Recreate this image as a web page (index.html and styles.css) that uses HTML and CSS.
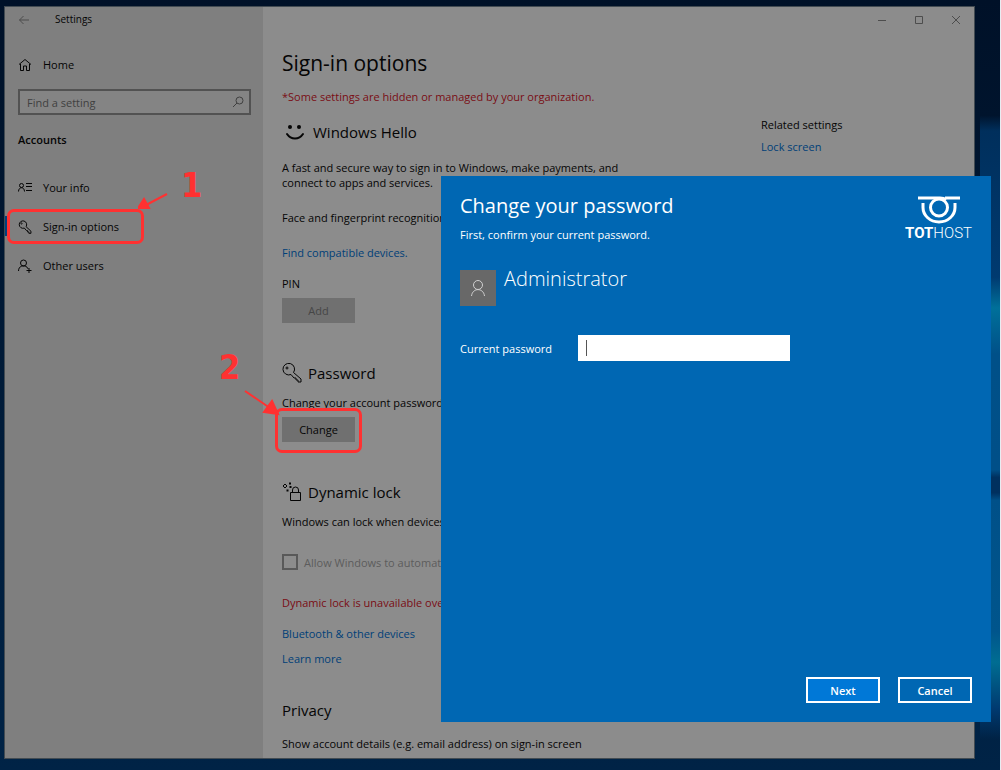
FILE: index.html
```html
<!DOCTYPE html>
<html lang="en">

<head>
    <meta charset="UTF-8">
    <meta name="viewport" content="width=device-width, initial-scale=1.0">
    <title>Settings</title>
    <link rel="stylesheet" href="styles.css">
</head>

<body>
    <div class="desktop">
        <div class="window">
            <aside class="sidebar">
                <header class="titlebar">
                    <button class="icon-btn" aria-label="Back">
                        <svg width="12" height="12" viewBox="0 0 12 12"><path d="M11 6H1.500M5.500 2L1.500 6l4 4" /></svg>
                    </button>
                    <span>Settings</span>
                </header>
                <a class="item home" href="#">
                    <svg width="14" height="14" viewBox="0 0 14 14"><path d="M1 6.500L7 1.500l6 5M2.500 6v6.500H5.500V8h3v4.500h3V6" /></svg>
                    Home
                </a>
                <div class="search">
                    <input type="text" placeholder="Find a setting" aria-label="Find a setting">
                    <svg width="12" height="12" viewBox="0 0 12 12"><circle cx="7.500" cy="4.500" r="3.500" /><path d="M5 7L1 11" /></svg>
                </div>
                <h2 class="group">Accounts</h2>
                <nav>
                    <a class="item" href="#">
                        <svg width="14" height="14" viewBox="0 0 14 14"><circle cx="3.500" cy="4.500" r="2" /><path d="M.5 10.500c0-5 6-5 6 0M8 2.500h6M8 5.500h6M8 9.500h6" /></svg>
                        Your info
                    </a>
                    <a class="item active" href="#">
                        <svg width="14" height="14" viewBox="0 0 20 20"><path class="thick" d="M11.500 9.500l7 6.500v3h-3v-2h-2v-2h-1.500l-3-3.500A5.300 5.300 0 1 1 11.500 9.500z" /><circle cx="5" cy="5" r="1" /></svg>
                        Sign-in options
                        <span class="mark mark-nav"></span>
                        <svg class="arrow arrow-nav" width="30" height="18" viewBox="0 0 30 18"><path d="M29 1L8 12" /><polygon points="0,15 6,6 11,15" /></svg>
                        <b class="step step-nav">1</b>
                    </a>
                    <a class="item" href="#">
                        <svg width="14" height="14" viewBox="0 0 14 14"><circle cx="5.500" cy="4" r="3" /><path d="M.5 12c0-7 9-6 9.500-2M11 9v5M8.500 11.500h5" /></svg>
                        Other users
                    </a>
                </nav>
            </aside>

            <main class="main">
                <div class="controls">
                    <button class="icon-btn" aria-label="Minimize"><svg width="10" height="10" viewBox="0 0 10 10"><path d="M1 5.500h8" /></svg></button>
                    <button class="icon-btn" aria-label="Maximize"><svg width="10" height="10" viewBox="0 0 10 10"><path d="M1.500 1.500h7v7h-7z" /></svg></button>
                    <button class="icon-btn" aria-label="Close"><svg width="10" height="10" viewBox="0 0 10 10"><path d="M1 1l8 8M9 1L1 9" /></svg></button>
                </div>
                <div class="columns">
                    <div class="content">
                        <h1>Sign-in options</h1>
                        <p class="warn">*Some settings are hidden or managed by your organization.</p>

                        <section class="hello">
                            <h2>
                                <svg class="smile" width="20" height="18" viewBox="0 0 20 18"><circle cx="5" cy="4" r="2" /><circle cx="14" cy="4" r="2" /><path d="M2 11c4 6 12 6 16 0" /></svg>
                                Windows Hello
                            </h2>
                            <p>A fast and secure way to sign in to Windows, make payments, and<br>connect to apps and services.</p>
                            <p class="gap">Face and fingerprint recognition</p>
                            <a class="link" href="#">Find compatible devices.</a>
                            <p class="pin">PIN</p>
                            <button class="btn" disabled>Add</button>
                        </section>

                        <section class="password">
                            <h2>
                                <svg width="20" height="20" viewBox="0 0 20 20"><path d="M11.500 9.500l7.500 6.500v3h-3v-2h-2v-2h-2l-3-3.500A5.800 5.800 0 1 1 11.500 9.500z" /><circle cx="5" cy="5" r="1" /></svg>
                                Password
                            </h2>
                            <p>Change your account password</p>
                            <div class="target">
                                <button class="btn">Change</button>
                                <span class="mark mark-btn"></span>
                                <svg class="arrow arrow-btn" width="36" height="26" viewBox="0 0 36 26"><path d="M1 1l25 17" /><polygon points="34,24 20,22 28,11" /></svg>
                                <b class="step step-btn">2</b>
                            </div>
                        </section>

                        <section class="dynamic">
                            <h2>
                                <svg width="20" height="20" viewBox="0 0 20 20"><path d="M8.500 10.500h10v8h-10zM10.500 10.500V8a3 3 0 0 1 6 0v2.500M3 2L5 4 3 6 1 4z" /><path class="dots" d="M7 1.500h2M7.500 5h2M4.500 8.500h2" /></svg>
                                Dynamic lock
                            </h2>
                            <p>Windows can lock when devices</p>
                            <label class="check"><input type="checkbox" disabled>Allow Windows to automat</label>
                            <p class="warn">Dynamic lock is unavailable ove</p>
                            <a class="link" href="#">Bluetooth &amp; other devices</a>
                            <a class="link more" href="#">Learn more</a>
                        </section>

                        <section class="privacy">
                            <h2>Privacy</h2>
                            <p>Show account details (e.g. email address) on sign-in screen</p>
                        </section>
                    </div>
                    <div class="related">
                        <p>Related settings</p>
                        <a class="link" href="#">Lock screen</a>
                    </div>
                </div>
            </main>
        </div>

        <form class="dialog" role="dialog" aria-labelledby="dialog-title">
            <div class="dialog-head">
                <div>
                    <h2 id="dialog-title">Change your password</h2>
                    <p>First, confirm your current password.</p>
                </div>
                <div class="logo">
                    <svg width="44" height="30" viewBox="0 0 44 30">
                        <path d="M1 3h22q4 0 6 2M28 3h15" />
                        <circle cx="22" cy="12.500" r="8.500" />
                        <path d="M6 8v4.500a16 14.500 0 0 0 32 0V8" />
                    </svg>
                    <span><b>TOT</b>HOST</span>
                </div>
            </div>
            <div class="user">
                <div class="avatar">
                    <svg width="16" height="18" viewBox="0 0 16 18"><circle cx="8" cy="6" r="4.500" /><path d="M1.500 17c1-8.500 12-8.500 13 0" /></svg>
                </div>
                <span>Administrator</span>
            </div>
            <div class="field">
                <label for="current">Current password</label>
                <div class="box">
                    <input id="current" type="password">
                    <i class="caret"></i>
                </div>
            </div>
            <div class="actions">
                <button class="next" type="button">Next</button>
                <button type="button">Cancel</button>
            </div>
        </form>
    </div>
</body>

</html>
```

FILE: styles.css
```css
* {
    margin: 0;
    padding: 0;
    box-sizing: border-box;
}

body {
    font: 11px/15px "Open Sans", "Noto Sans", sans-serif;
    color: #050505;
    background-color: #fff;
}

button,
input {
    font: inherit;
    color: inherit;
}

a {
    color: inherit;
    text-decoration: none;
}

svg {
    flex: none;
    fill: none;
    stroke: currentColor;
}

.desktop {
    position: relative;
    display: flex;
    min-height: 100vh;
    padding: 6px 25px 11px 4px;
    border: solid #e8edf2;
    border-width: 0 1px 1px 0;
    background:
        linear-gradient(to bottom, transparent 15%, #002f5c 17%, #003a70 36%, #00709a 40%, #005088 46%, #004f88 61%, #00305f 62%, #00305f 64%, #005088 65%, #00558c 82%, #006d92 86%, #003a70 92%, transparent 96%) right / 20px 100% no-repeat,
        linear-gradient(to bottom, #001128, #001c3a 55%, #002346);
}

.window {
    display: flex;
    flex: 1;
    border: 1px solid #424b52;
    background-color: #8c8c8c;
}

/* left menu */
.sidebar {
    width: 258px;
    flex: none;
    background-color: #7f7f7f;
}

.titlebar {
    display: flex;
    align-items: center;
    height: 25px;
    padding-left: 13px;
    font-size: 10px;
}

.icon-btn {
    display: flex;
    align-items: center;
    justify-content: center;
    border: 0;
    background: none;
    color: #4d4d4d;
}

.titlebar span {
    margin-left: 25px;
}

.item {
    position: relative;
    display: flex;
    align-items: center;
    gap: 11px;
    height: 39px;
    padding-left: 13px;
}

.home {
    margin-top: 13px;
}

.search {
    display: flex;
    align-items: center;
    height: 26px;
    margin: 5px 12px 0 13px;
    padding-right: 5px;
    border: 2px solid #525252;
    background-color: #848484;
    color: #404040;
}

.search input {
    flex: 1;
    min-width: 0;
    padding-left: 7px;
    border: 0;
    outline: 0;
    background: none;
}

.search input::placeholder {
    color: #404040;
}

.group {
    margin: 17px 0 21px 13px;
    font-size: 11px;
    line-height: 15px;
    font-weight: 600;
}

.active::before {
    content: "";
    position: absolute;
    left: 0;
    top: 9px;
    width: 3px;
    height: 20px;
    background-color: #00417c;
}

.thick {
    stroke-width: 1.4;
}

/* red guide marks */
.mark {
    position: absolute;
    border: 3px solid #ff3131;
    border-radius: 7px;
    pointer-events: none;
}

.mark-nav {
    left: 2px;
    top: 2px;
    width: 137px;
    height: 35px;
}

.mark-btn {
    left: -7px;
    top: -9px;
    width: 87px;
    height: 45px;
}

.arrow {
    position: absolute;
    color: #ff3131;
    stroke-width: 2;
    pointer-events: none;
}

.arrow polygon {
    fill: #ff3131;
}

.arrow-nav {
    left: 133px;
    top: -14px;
}

.arrow-btn {
    left: -38px;
    top: -27px;
}

.step {
    position: absolute;
    color: #ff3131;
    font: bold 34px/34px "DejaVu Sans Condensed", "DejaVu Sans", sans-serif;
}

.step-nav {
    left: 176px;
    top: -39px;
}

.step-btn {
    left: -63px;
    top: -67px;
}

/* settings page */
.main {
    flex: 1;
    min-width: 0;
}

.controls {
    display: flex;
    justify-content: flex-end;
    gap: 27px;
    height: 25px;
    padding-right: 13px;
}

.columns {
    display: flex;
    padding: 13px 20px 7px 19px;
}

.content {
    flex: 1;
}

h1 {
    font-size: 21px;
    line-height: 36px;
    font-weight: 400;
}

.warn {
    color: #7a0d14;
}

h1 + .warn {
    margin-top: 8px;
}

.link {
    display: block;
    color: #003f78;
}

.content h2 {
    display: flex;
    align-items: center;
    gap: 6px;
    font-size: 15px;
    line-height: 28px;
    font-weight: 400;
}

.hello {
    margin-top: 14px;
}

.hello h2 {
    margin-bottom: 14px;
    padding-left: 3px;
    gap: 8px;
}

.smile {
    stroke-width: 2;
    stroke-linecap: round;
}

.smile circle {
    fill: currentColor;
    stroke: none;
}

.gap {
    margin: 20px 0;
}

.pin {
    margin: 16px 0 7px;
}

.btn {
    display: block;
    width: 73px;
    height: 25px;
    border: 0;
    background-color: #707070;
}

.btn:disabled {
    color: #464646;
}

.password,
.dynamic {
    margin-top: 36px;
}

.password h2,
.dynamic h2 {
    margin-bottom: 8px;
}

.target {
    position: relative;
    margin-top: 7px;
}

.dots {
    stroke-width: 2;
}

.check {
    display: flex;
    align-items: center;
    gap: 6px;
    margin: 25px 0;
    color: #5c5c5c;
}

.check input {
    appearance: none;
    width: 16px;
    height: 16px;
    border: 2px solid #595959;
}

.dynamic .link {
    margin-top: 16px;
}

.dynamic .more {
    margin-top: 10px;
}

.privacy {
    margin-top: 30px;
}

.privacy h2 {
    margin-bottom: 12px;
}

.related {
    width: 193px;
    flex: none;
    padding-top: 72px;
}

.related .link {
    margin-top: 7px;
}

/* password dialog */
.dialog {
    position: absolute;
    left: 441px;
    top: 176px;
    right: 9px;
    height: 546px;
    display: flex;
    flex-direction: column;
    padding: 12px 19px 19px;
    background-color: #0067b3;
    color: #fff;
}

.dialog-head {
    display: flex;
    justify-content: space-between;
}

.dialog h2 {
    font-size: 20px;
    line-height: 36px;
    font-weight: 400;
}

.dialog-head p {
    margin-top: 3px;
}

.logo {
    display: flex;
    flex-direction: column;
    align-items: center;
    padding-top: 7px;
    stroke-width: 3;
}

.logo span {
    font: 300 15px/16px "Roboto", sans-serif;
}

.logo b {
    font-weight: 700;
}

.user {
    display: flex;
    gap: 8px;
    margin-top: 28px;
    font-size: 20px;
    line-height: 18px;
    font-weight: 300;
}

.avatar {
    display: flex;
    align-items: center;
    justify-content: center;
    width: 36px;
    height: 36px;
    background-color: #686868;
    color: #d0d0d0;
}

.field {
    display: flex;
    align-items: center;
    margin-top: 29px;
}

.field label {
    width: 118px;
}

.box {
    position: relative;
    width: 212px;
}

.box input {
    display: block;
    width: 100%;
    height: 26px;
    padding: 0 8px;
    border: 0;
    background-color: #fff;
    color: #000;
}

.caret {
    position: absolute;
    left: 8px;
    top: 5px;
    width: 1px;
    height: 16px;
    background-color: #555;
}

.actions {
    display: flex;
    justify-content: flex-end;
    gap: 18px;
    margin-top: auto;
}

.actions button {
    width: 74px;
    height: 26px;
    border: 2px solid #fff;
    background-color: #0067b3;
    font-weight: 600;
}

.actions .next {
    background-color: #0078d7;
}
```
